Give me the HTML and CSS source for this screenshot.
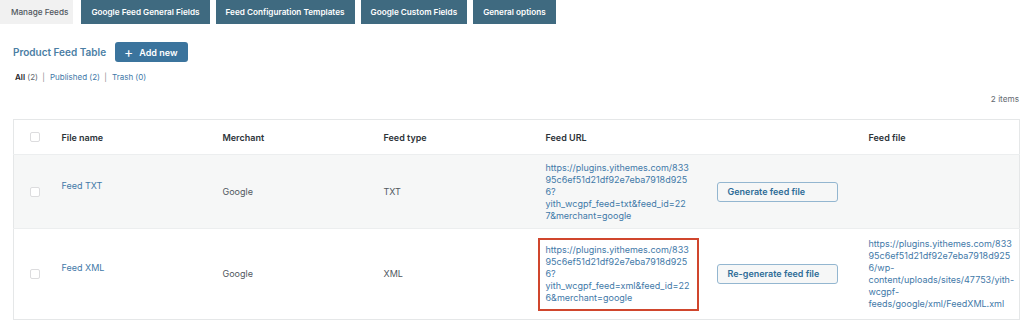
FILE: index.html
```html
<!DOCTYPE html>
<html>
<head>
<meta charset="utf-8">
<link rel="stylesheet" href="styles.css">
</head>
<body>
<nav class="tabs">
  <span class="tab active">Manage Feeds</span>
  <span class="tab">Google Feed General Fields</span>
  <span class="tab">Feed Configuration Templates</span>
  <span class="tab">Google Custom Fields</span>
  <span class="tab">General options</span>
</nav>
<main class="wrap">
  <div class="heading">
    <h1 class="title">Product Feed Table</h1>
    <a class="add-new"><span class="plus">+</span>Add new</a>
  </div>
  <ul class="subsub">
    <li><b class="current">All</b> <span class="count">(2)</span> <span class="sep">|</span></li>
    <li><a>Published <span class="count">(2)</span></a> <span class="sep">|</span></li>
    <li><a>Trash <span class="count">(0)</span></a></li>
  </ul>
  <div class="items">2 items</div>
  <table class="feeds">
    <colgroup>
      <col class="c-cb"><col class="c-name"><col class="c-merchant"><col class="c-type"><col class="c-url"><col class="c-btn"><col class="c-file">
    </colgroup>
    <thead>
      <tr>
        <th class="cb"><span class="box"></span></th>
        <th>File name</th>
        <th>Merchant</th>
        <th>Feed type</th>
        <th>Feed URL</th>
        <th></th>
        <th>Feed file</th>
      </tr>
    </thead>
    <tbody>
      <tr class="alt r1">
        <td class="cb"><span class="box"></span></td>
        <td class="name"><a>Feed TXT</a></td>
        <td>Google</td>
        <td>TXT</td>
        <td class="url"><a>https://plugins.yithemes.com/833<br>95c6ef51d21df92e7eba7918d925<br>6?<br>yith_wcgpf_feed=txt&amp;feed_id=22<br>7&amp;merchant=google</a></td>
        <td><span class="btn">Generate feed file</span></td>
        <td></td>
      </tr>
      <tr class="r2">
        <td class="cb"><span class="box"></span></td>
        <td class="name"><a>Feed XML</a></td>
        <td>Google</td>
        <td>XML</td>
        <td class="url"><div class="hl"><a>https://plugins.yithemes.com/833<br>95c6ef51d21df92e7eba7918d925<br>6?<br>yith_wcgpf_feed=xml&amp;feed_id=22<br>6&amp;merchant=google</a></div></td>
        <td><span class="btn">Re-generate feed file</span></td>
        <td class="file"><a>https://plugins.yithemes.com/833<br>95c6ef51d21df92e7eba7918d925<br>6/wp-<br>content/uploads/sites/47753/yith-<br>wcgpf-<br>feeds/google/xml/FeedXML.xml</a></td>
      </tr>
    </tbody>
  </table>
</main>
</body>
</html>
```
FILE: styles.css
```css
* { box-sizing: border-box; }
body {
  margin: 0;
  background: #fff;
  font-family: Inter, "Noto Sans", sans-serif;
  font-size: 9px;
  color: #3c434a;
}
a { color: #3f79a8; text-decoration: none; }

.tabs {
  display: flex;
  gap: 6px;
  height: 24px;
}
.tab {
  display: flex;
  align-items: center;
  padding: 0 10px;
  background: #3f6a80;
  color: #fff;
  font-weight: 600;
  font-size: 8.2px;
}
.tab.active {
  background: #f1f1f1;
  color: #50575e;
  font-weight: 500;
  padding: 0 5px 0 11px;
  margin-right: 2px;
}

.wrap { padding: 0 5px 0 13px; }

.heading {
  display: flex;
  align-items: center;
  gap: 9px;
  margin-top: 18px;
  height: 20px;
}
.title {
  margin: 0;
  font-size: 10px;
  font-weight: 600;
  color: #4a7ea4;
}
.add-new {
  display: flex;
  align-items: center;
  height: 20px;
  padding: 0 10px 0 9px;
  background: #3b749d;
  color: #fff;
  border-radius: 3px;
  font-weight: 600;
  font-size: 9px;
}
.plus { font-size: 14px; font-weight: 400; margin-right: 6px; line-height: 1; }

.subsub {
  list-style: none;
  margin: 10px 0 0 2px;
  padding: 0;
  display: flex;
  gap: 3px;
  font-size: 8px;
  color: #646970;
}
.subsub .current { color: #1d2327; font-weight: 600; }
.subsub a { color: #3f79a8; }
.sep { color: #8c8f94; margin: 0 2px; }

.items {
  text-align: right;
  font-size: 8.2px;
  color: #646970;
  margin-top: 12px;
  height: 14px;
  padding-right: 0;
}

.feeds {
  width: 1006px;
  margin-top: 11px;
  border-collapse: collapse;
  table-layout: fixed;
  border: 1px solid #e5e7e8;
}
.c-cb { width: 40px; }
.c-name { width: 161px; }
.c-merchant { width: 161px; }
.c-type { width: 162px; }
.c-url { width: 171px; }
.c-btn { width: 152px; }
.c-file { width: 159px; }

th {
  text-align: left;
  font-weight: 600;
  color: #2c3338;
  height: 35px;
  padding: 0 8px;
  font-size: 9px;
}
td {
  padding: 0 8px;
  vertical-align: middle;
  color: #50575e;
  line-height: 12px;
}
tbody tr { border-top: 1px solid #eceeef; }
tr.alt { background: #f6f7f7; }
tr.r1 { height: 74px; }
tr.r2 { height: 91px; }
th.cb, td.cb { padding: 0 0 0 16px; }
.box {
  display: block;
  width: 10px;
  height: 10px;
  border: 1px solid #dcdcde;
  border-radius: 2px;
  background: #fff;
}
td.name a { display: block; padding-bottom: 12px; }
td.url, td.file { line-height: 12px; white-space: nowrap; }
td.file { padding-right: 0; }
.hl {
  border: 2px solid #d0462d;
  margin: 0 2px 0 -8px;
  padding: 4px 6px 5px 6px;
}
.btn {
  display: block;
  width: 121px;
  height: 20px;
  line-height: 18px;
  border: 1px solid #93b6d0;
  border-radius: 3px;
  background: #f6f7f7;
  color: #2f6d97;
  font-weight: 600;
  padding-left: 10px;
  margin-left: 0;
}
```
